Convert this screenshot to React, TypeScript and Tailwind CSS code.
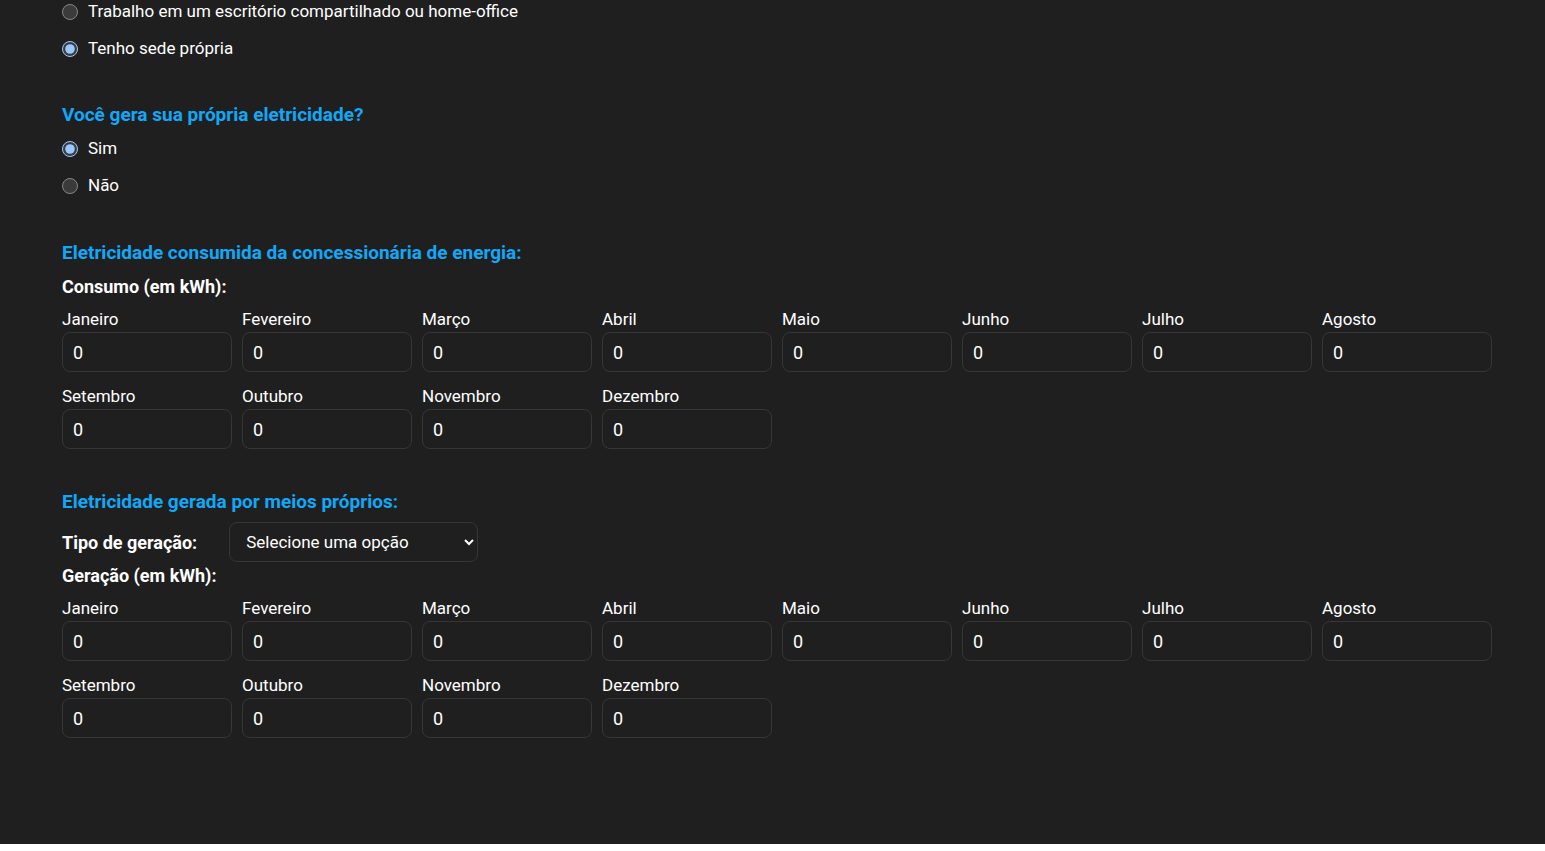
import { useState } from "react"

const months = [
  "Janeiro",
  "Fevereiro",
  "Março",
  "Abril",
  "Maio",
  "Junho",
  "Julho",
  "Agosto",
  "Setembro",
  "Outubro",
  "Novembro",
  "Dezembro",
]

function Radio({ name, label, checked }: { name: string; label: string; checked?: boolean }) {
  return (
    <label className="flex items-center gap-[10px] h-[37px]">
      <input type="radio" name={name} defaultChecked={checked} className="w-4 h-4 m-0" />
      <span className="text-[17px] text-white">{label}</span>
    </label>
  )
}

function MonthGrid() {
  const [values, setValues] = useState<string[]>(months.map(() => "0"))
  return (
    <div className="grid grid-cols-8 gap-x-[10px] gap-y-[13px]">
      {months.map((m, i) => (
        <div key={m} className="flex flex-col">
          <span className="text-[17px] text-white leading-[22px] mb-[2px]">{m}</span>
          <input
            type="text"
            value={values[i]}
            onChange={(e) => {
              const next = [...values]
              next[i] = e.target.value
              setValues(next)
            }}
            className="h-10 w-full rounded-lg border border-[#363636] bg-transparent px-[10px] text-[18px] text-white outline-none"
          />
        </div>
      ))}
    </div>
  )
}

export default function App() {
  return (
    <div
      className="min-h-[851px] bg-[#1f1f1f] text-white [color-scheme:dark] pl-[62px] pr-[53px]"
      style={{ fontFamily: "Roboto, 'Noto Sans', sans-serif" }}
    >
      {/* Sede */}
      <div className="flex flex-col -mt-[7px]">
        <Radio name="sede" label="Trabalho em um escritório compartilhado ou home-office" />
        <Radio name="sede" label="Tenho sede própria" checked />
      </div>

      {/* Geração própria */}
      <h2 className="mt-[35px] text-[19px] font-bold text-[#10a8f7] leading-[26px]">
        Você gera sua própria eletricidade?
      </h2>
      <div className="flex flex-col mt-[2px]">
        <Radio name="gera" label="Sim" checked />
        <Radio name="gera" label="Não" />
      </div>

      {/* Consumo */}
      <h2 className="mt-[36px] text-[19px] font-bold text-[#10a8f7] leading-[26px]">
        Eletricidade consumida da concessionária de energia:
      </h2>
      <p className="mt-[9px] text-[18px] font-bold leading-[24px]">Consumo (em kWh):</p>
      <div className="mt-[9px]">
        <MonthGrid />
      </div>

      {/* Geração */}
      <h2 className="mt-[40px] text-[19px] font-bold text-[#10a8f7] leading-[26px]">
        Eletricidade gerada por meios próprios:
      </h2>
      <div className="mt-[7px] flex items-center gap-[32px]">
        <span className="text-[18px] font-bold">Tipo de geração:</span>
        <select className="h-10 w-[249px] rounded-lg border border-[#363636] bg-[#1f1f1f] pl-[12px] pr-2 text-[17px] text-white outline-none">
          <option>Selecione uma opção</option>
          <option>Solar fotovoltaica</option>
          <option>Eólica</option>
          <option>Biomassa</option>
        </select>
      </div>
      <p className="mt-[2px] text-[18px] font-bold leading-[24px]">Geração (em kWh):</p>
      <div className="mt-[9px]">
        <MonthGrid />
      </div>
    </div>
  )
}
